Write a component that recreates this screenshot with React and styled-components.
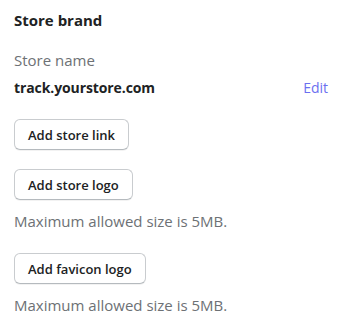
import React from 'react';
import styled, { createGlobalStyle } from 'styled-components';

const GlobalStyle = createGlobalStyle`
    body {
        margin: 0;
        background: #ffffff;
        font-family: "Open Sans", "Noto Sans", sans-serif;
        color: #202223;
    }
`

const Panel = styled.div`
    width: 342px;
    height: 324px;
    box-sizing: border-box;
    padding: 10px 14px 0 14px;
    display: flex;
    flex-direction: column;
`

const Title = styled.h2`
    margin: 0 0 20px 0;
    font-size: 15px;
    font-weight: 700;
    line-height: 20px;
    color: #202223;
`

const Label = styled.div`
    font-size: 15px;
    line-height: 20px;
    color: #6d7175;
    margin-bottom: 8px;
`

const NameRow = styled.div`
    display: flex;
    justify-content: space-between;
    align-items: center;
    margin-bottom: 21px;
`

const Domain = styled.span`
    font-size: 14px;
    font-weight: 700;
    line-height: 20px;
    letter-spacing: -0.1px;
`

const EditLink = styled.a`
    font-size: 14px;
    line-height: 20px;
    color: #6b6ff0;
    text-decoration: none;
`

const Group = styled.div`
    display: flex;
    flex-direction: column;
    align-items: flex-start;
    margin-bottom: ${p => p.gap}px;
`

const Button = styled.button`
    font-family: inherit;
    font-size: 13px;
    font-weight: 600;
    color: #202223;
    background: #ffffff;
    border: 1px solid #c9cccf;
    border-bottom-color: #b5babe;
    border-radius: 6px;
    box-shadow: 0 1px 0 rgba(0, 0, 0, 0.05);
    height: 31px;
    padding: 0 13px;
    cursor: pointer;
`

const Hint = styled.p`
    margin: 11px 0 0 0;
    font-size: 15px;
    line-height: 20px;
    color: #6d7175;
`

export default function App() {
    return (
        <>
            <GlobalStyle />
            <Panel>
                <Title>Store brand</Title>
                <Label>Store name</Label>
                <NameRow>
                    <Domain>track.yourstore.com</Domain>
                    <EditLink href="#">Edit</EditLink>
                </NameRow>
                <Group gap={19}>
                    <Button>Add store link</Button>
                </Group>
                <Group gap={22}>
                    <Button>Add store logo</Button>
                    <Hint>Maximum allowed size is 5MB.</Hint>
                </Group>
                <Group gap={0}>
                    <Button>Add favicon logo</Button>
                    <Hint>Maximum allowed size is 5MB.</Hint>
                </Group>
            </Panel>
        </>
    )
}
